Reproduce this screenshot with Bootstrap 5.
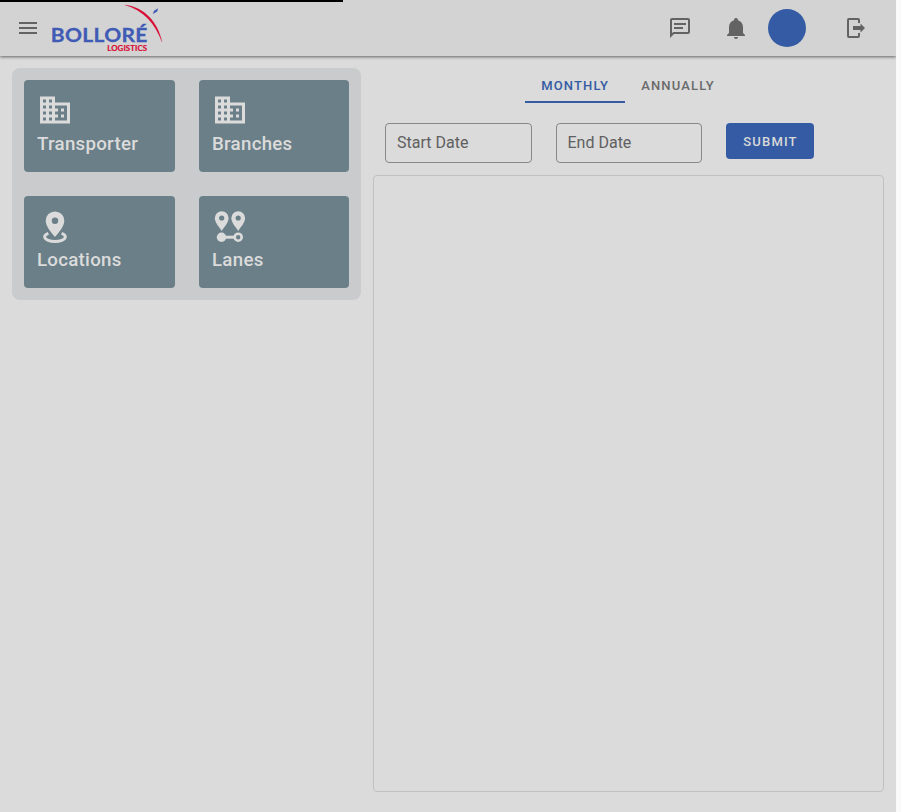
<!DOCTYPE html>
<html lang="en">
<head>
<meta charset="utf-8">
<meta name="viewport" content="width=device-width, initial-scale=1">
<title>Bolloré Logistics</title>
<link rel="stylesheet" href="https://cdn.jsdelivr.net/npm/bootstrap@5.3.0/dist/css/bootstrap.min.css">
<style>
body{background:#fafafa;font-family:Roboto,sans-serif;letter-spacing:0}
.app-shell{width:896px;height:812px;background:#dbdbdb}
.load-line{width:343px;height:2px;background:#000;left:0;top:0;z-index:3}
.app-bar{height:56px;background:#d3d3d3;box-shadow:0 1px 3px rgba(0,0,0,.55);color:#636363;padding:0 28px 0 16px;z-index:1}
.app-bar svg{fill:currentColor;display:block}
.brand-logo{margin-left:8px}
.avatar-dot{width:38px;height:38px;background:#345ba3;margin-left:20px}
.tool-gap{margin-left:32px}
.exit-gap{margin-left:38px}
.main-area{padding:12px;gap:12px}
.tile-panel{width:349px;height:232px;background:#cacbcd;border-radius:8px;padding:12px;display:grid;grid-template-columns:151px 150px;gap:24px}
.tile{background:#6a7f88;color:#dbdbdb;border-radius:4px;padding:12px 13px;height:92px;text-decoration:none}
.tile svg{fill:currentColor;display:block}
.tile-name{font-size:18.7px;font-weight:500;line-height:32px;letter-spacing:.27px}
.report{width:511px}
.tab-row{height:35px;padding-right:1px}
.tab-link{height:35px;padding:0 16px;line-height:36px;font-size:13px;font-weight:500;letter-spacing:1.16px;color:#6a6a6a;background:none;border:0;border-bottom:2px solid transparent;border-radius:0}
.tab-link.active{color:#345ba3;border-color:#345ba3;width:100px}
.filter-row{margin:20px 0 12px 12px;gap:24px;height:40px}
.date-box{height:40px;border:1px solid #888;border-radius:4px;width:146.5px;padding:0 11px;font-size:16px;line-height:38px;color:#606060}
.submit-btn,.submit-btn:hover{width:88px;height:36px;background:#345ba3;color:#d9d9d9;border:0;border-radius:4px;padding:1px 0 0 1px;font-size:13px;font-weight:500;letter-spacing:1.16px;line-height:36px}
.chart-box{height:617px;border:1px solid #c1c1c1;border-radius:4px}
</style>
<script src="https://cdn.jsdelivr.net/npm/bootstrap@5.3.0/dist/js/bootstrap.bundle.min.js"></script>
</head>
<body class="overflow-hidden">
<div class="app-shell position-relative overflow-hidden">
  <div class="load-line position-absolute"></div>
  <header class="app-bar d-flex align-items-center position-relative">
    <svg width="24" height="24" viewBox="0 0 24 24"><path d="M3 6h18v2H3zm0 5h18v2H3zm0 5h18v2H3z"/></svg>
    <svg class="brand-logo" width="120" height="56" viewBox="48 0 120 56">
      <text x="50.800" y="42.400" textLength="97" lengthAdjust="spacingAndGlyphs" font-family="Lato" font-weight="700" font-size="19.400" letter-spacing=".3" fill="#405bb5" stroke="#405bb5" stroke-width=".3">BOLLORÉ</text>
      <text x="107.200" y="50.700" textLength="40" lengthAdjust="spacingAndGlyphs" font-family="Lato" font-weight="700" font-size="7.300" letter-spacing=".1" fill="#d80b34" stroke="#d80b34" stroke-width=".2">LOGISTICS</text>
      <path d="M125 5C144 7 158 22 162 42C155 23 143 10 125 5Z" fill="#d80b34" stroke="#d80b34" stroke-width=".2"/>
      <path d="M152.800 14L154 10.800L158 8.300L157.300 11.500Z" fill="#405bb5"/>
    </svg>
    <svg class="ms-auto" width="24" height="24" viewBox="0 0 24 24"><path d="M20,2A2,2 0 0,1 22,4V16A2,2 0 0,1 20,18H6L2,22V4C2,2.89 2.9,2 4,2H20M4,4V17.17L5.17,16H20V4H4M6,7H18V9H6V7M6,11H15V13H6V11Z"/></svg>
    <svg class="tool-gap" width="24" height="24" viewBox="0 0 24 24"><path d="M21,19V20H3V19L5,17V11C5,7.9 7.03,5.17 10,4.29C10,4.19 10,4.1 10,4A2,2 0 0,1 12,2A2,2 0 0,1 14,4C14,4.1 14,4.19 14,4.29C16.97,5.17 19,7.9 19,11V17L21,19M14,21A2,2 0 0,1 12,23A2,2 0 0,1 10,21"/></svg>
    <div class="avatar-dot rounded-circle"></div>
    <svg class="exit-gap" width="24" height="24" viewBox="0 0 24 24"><path d="M5 2H14A2 2 0 0 1 16 4V7H14V4H5V20H14V17H16V20A2 2 0 0 1 14 22H5A2 2 0 0 1 3 20V4A2 2 0 0 1 5 2ZM9 10H16.500V7.500L21 12L16.500 16.500V14H9Z"/></svg>
  </header>
  <main class="main-area d-flex align-items-start">
    <nav class="tile-panel">
      <a class="tile" href="#">
        <svg width="36" height="36" viewBox="0 0 24 24"><path d="M18,15H16V17H18M18,11H16V13H18M20,19H12V17H14V15H12V13H14V11H12V9H20M10,7H8V5H10M10,11H8V9H10M10,15H8V13H10M10,19H8V17H10M6,7H4V5H6M6,11H4V9H6M6,15H4V13H6M6,19H4V17H6M12,7V3H2V21H22V7H12Z"/></svg>
        <div class="tile-name">Transporter</div>
      </a>
      <a class="tile" href="#">
        <svg width="36" height="36" viewBox="0 0 24 24"><path d="M18,15H16V17H18M18,11H16V13H18M20,19H12V17H14V15H12V13H14V11H12V9H20M10,7H8V5H10M10,11H8V9H10M10,15H8V13H10M10,19H8V17H10M6,7H4V5H6M6,11H4V9H6M6,15H4V13H6M6,19H4V17H6M12,7V3H2V21H22V7H12Z"/></svg>
        <div class="tile-name">Branches</div>
      </a>
      <a class="tile" href="#">
        <svg width="36" height="36" viewBox="0 0 36 36"><path fill-rule="evenodd" d="M18 3.400A9.300 9.300 0 0 0 8.700 12.700C8.700 18.900 15 25 18 28.900C21 25 27.300 18.900 27.300 12.700A9.300 9.300 0 0 0 18 3.400ZM18 9.500A3.200 3.200 0 1 1 18 15.900A3.200 3.200 0 1 1 18 9.500Z"/><path d="M11.400 25.300C4 28 8 33.400 18 33.400S32 28 24.600 25.300" fill="none" stroke="currentColor" stroke-width="3"/></svg>
        <div class="tile-name">Locations</div>
      </a>
      <a class="tile" href="#">
        <svg width="36" height="36" viewBox="0 0 36 36"><path fill-rule="evenodd" d="M9.700 3.200A6.900 6.900 0 0 0 2.800 10.100C2.800 15 7.500 19.500 9.700 23C11.900 19.500 16.600 15 16.600 10.100A6.900 6.900 0 0 0 9.700 3.200ZM9.700 7.400A2.600 2.600 0 1 1 9.700 12.600A2.600 2.600 0 1 1 9.700 7.400ZM26.200 3.200A6.900 6.900 0 0 0 19.300 10.100C19.300 15 24 19.500 26.200 23C28.400 19.500 33.100 15 33.100 10.100A6.900 6.900 0 0 0 26.200 3.200ZM26.200 7.400A2.600 2.600 0 1 1 26.200 12.600A2.600 2.600 0 1 1 26.200 7.400Z"/><circle cx="9.500" cy="29.200" r="4.700"/><path d="M10 29.200H22.500" stroke="currentColor" stroke-width="3"/><circle cx="26.200" cy="29.200" r="3.500" fill="none" stroke="currentColor" stroke-width="2.600"/></svg>
        <div class="tile-name">Lanes</div>
      </a>
    </nav>
    <section class="report">
      <div class="tab-row d-flex justify-content-center">
        <button class="tab-link active">MONTHLY</button>
        <button class="tab-link">ANNUALLY</button>
      </div>
      <div class="filter-row d-flex align-items-start">
        <div class="date-box">Start Date</div>
        <div class="date-box">End Date</div>
        <button class="btn submit-btn">SUBMIT</button>
      </div>
      <div class="chart-box"></div>
    </section>
  </main>
</div>
</body>
</html>
